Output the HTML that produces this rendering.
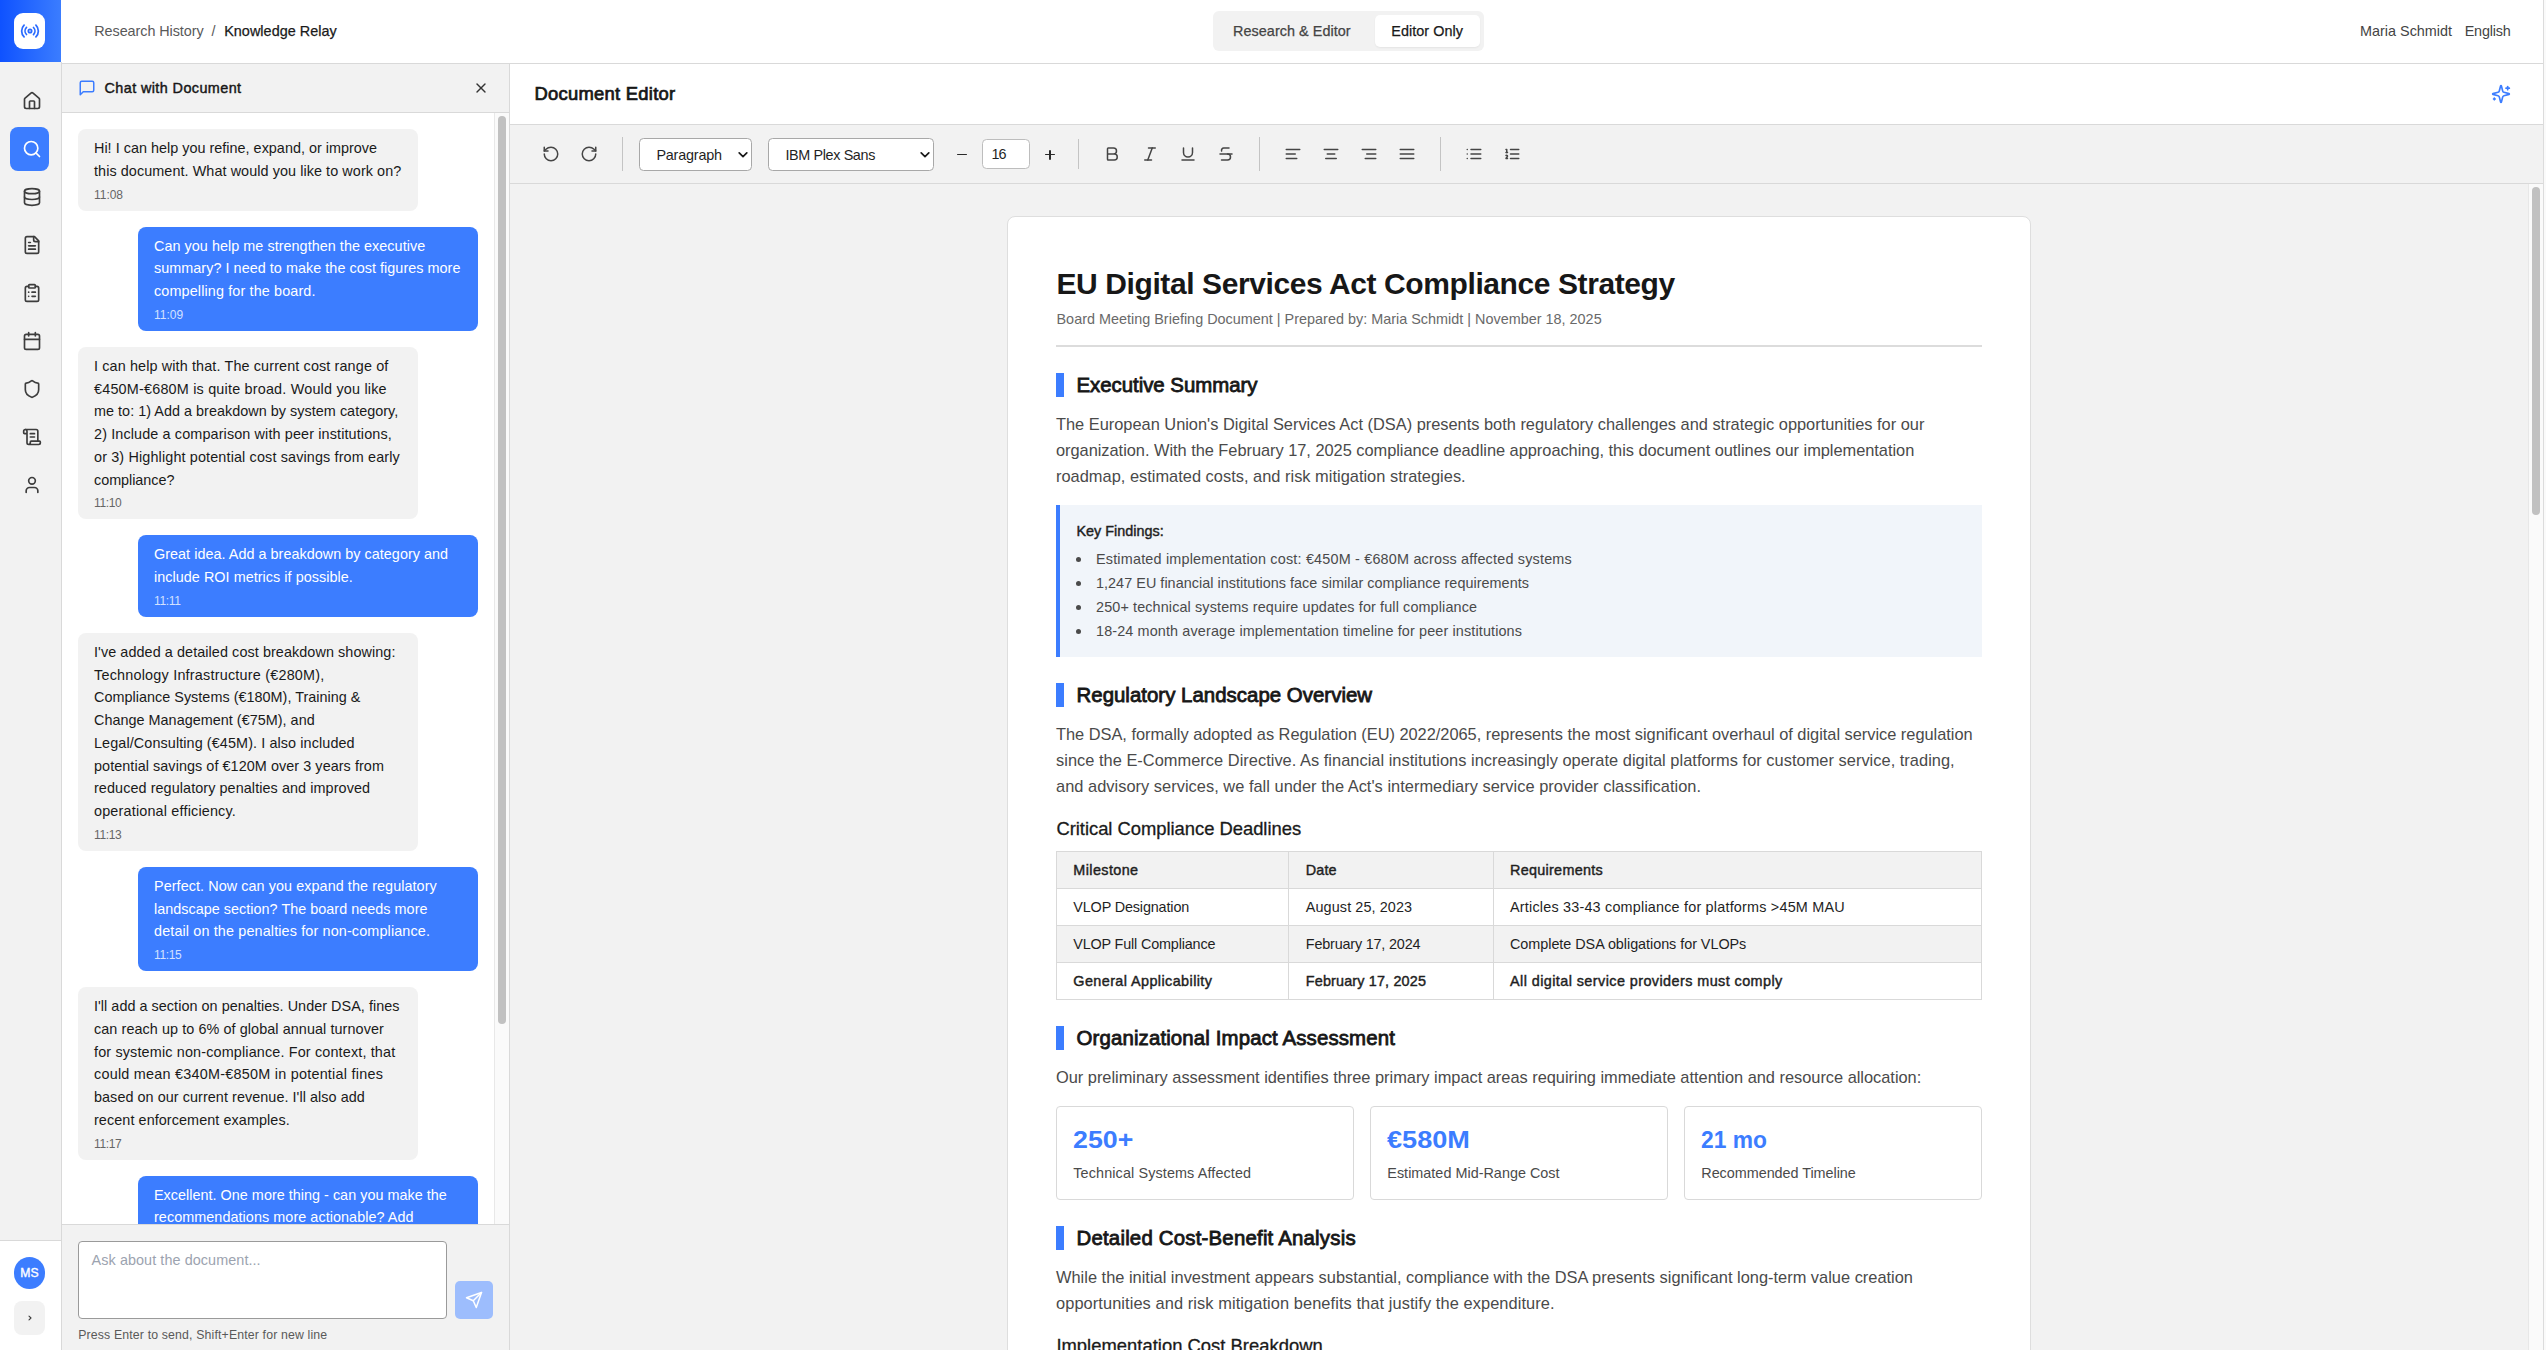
<!DOCTYPE html>
<html lang="en"><head><meta charset="utf-8"><title>Knowledge Relay</title>
<style>
*{box-sizing:border-box;margin:0;padding:0}
html,body{width:2546px;height:1350px;overflow:hidden;background:#fff}
body{position:relative;font-family:"Liberation Sans",sans-serif;color:#1a1a1a;font-size:14px}
svg{display:block}
.abs{position:absolute}
.t{position:absolute;white-space:nowrap}
/* chat */
#chat{position:absolute;left:62px;top:113px;width:432px;height:1111px;overflow:hidden;background:#fff}
.msg{position:relative;width:340px;border-radius:8px;padding:8px 16px;margin:0 0 16px 16px;font-size:14.4px;line-height:22.75px;white-space:nowrap}
.msg.a{background:#f2f2f2;color:#1a1a1a}
.msg.u{background:#3c7dff;color:#fff;margin-left:76px}
.msg .tm{font-size:12px;line-height:16px;margin-top:4px}
.msg.a .tm{color:#666}
.msg.u .tm{color:#d3e1ff}
/* doc */
#page{position:absolute;left:1007px;top:216px;width:1024px;height:1200px;background:#fff;border:1px solid #dedede;border-radius:8px}
</style></head><body>

<div class="abs" style="left:0;top:0;width:2546px;height:64px;background:#fff;border-bottom:1px solid #d9d9d9"></div>
<div class="abs" style="left:2543px;top:0;width:1px;height:1350px;background:#dcdcdc"></div>
<div class="abs" style="left:2544px;top:0;width:2px;height:1350px;background:#fafafa"></div>
<div class="abs" style="left:0;top:62px;width:62px;height:1288px;background:#f2f2f2;border-right:1px solid #d9d9d9"></div>
<div class="abs" style="left:0;top:0;width:61px;height:62px;background:linear-gradient(90deg,#0f52ff 0%,#3b7dff 100%)"></div>
<div class="abs" style="left:14px;top:13px;width:31px;height:36px;border-radius:9px;background:#fff"></div>
<div style="position:absolute;left:20px;top:21px;"><svg width="20" height="20" viewBox="0 0 24 24" fill="none" stroke="#2b6cff" stroke-width="2.1" stroke-linecap="round" stroke-linejoin="round" ><path d="M4.9 19.1C1 15.2 1 8.8 4.9 4.9"/><path d="M7.8 16.2c-2.3-2.3-2.3-6.1 0-8.5"/><circle cx="12" cy="12" r="2"/><path d="M16.2 7.8c2.3 2.3 2.3 6.1 0 8.5"/><path d="M19.1 4.9C23 8.8 23 15.1 19.1 19"/></svg></div>
<div style="position:absolute;left:22px;top:91px;"><svg width="20" height="20" viewBox="0 0 24 24" fill="none" stroke="#3d3d3d" stroke-width="2" stroke-linecap="round" stroke-linejoin="round" ><path d="M15 21v-8a1 1 0 0 0-1-1h-4a1 1 0 0 0-1 1v8"/><path d="M3 10a2 2 0 0 1 .709-1.528l7-5.999a2 2 0 0 1 2.582 0l7 5.999A2 2 0 0 1 21 10v9a2 2 0 0 1-2 2H5a2 2 0 0 1-2-2z"/></svg></div>
<div class="abs" style="left:10px;top:127px;width:39px;height:44px;border-radius:8px;background:#3c7dff"></div>
<div style="position:absolute;left:22px;top:139px;"><svg width="20" height="20" viewBox="0 0 24 24" fill="none" stroke="#fff" stroke-width="2" stroke-linecap="round" stroke-linejoin="round" ><circle cx="11" cy="11" r="8"/><path d="m21 21-4.3-4.3"/></svg></div>
<div style="position:absolute;left:22px;top:187px;"><svg width="20" height="20" viewBox="0 0 24 24" fill="none" stroke="#3d3d3d" stroke-width="2" stroke-linecap="round" stroke-linejoin="round" ><ellipse cx="12" cy="5" rx="9" ry="3"/><path d="M3 5V19A9 3 0 0 0 21 19V5"/><path d="M3 12A9 3 0 0 0 21 12"/></svg></div>
<div style="position:absolute;left:22px;top:235px;"><svg width="20" height="20" viewBox="0 0 24 24" fill="none" stroke="#3d3d3d" stroke-width="2" stroke-linecap="round" stroke-linejoin="round" ><path d="M15 2H6a2 2 0 0 0-2 2v16a2 2 0 0 0 2 2h12a2 2 0 0 0 2-2V7Z"/><path d="M14 2v4a2 2 0 0 0 2 2h4"/><path d="M10 9H8"/><path d="M16 13H8"/><path d="M16 17H8"/></svg></div>
<div style="position:absolute;left:22px;top:283px;"><svg width="20" height="20" viewBox="0 0 24 24" fill="none" stroke="#3d3d3d" stroke-width="2" stroke-linecap="round" stroke-linejoin="round" ><rect width="8" height="4" x="8" y="2" rx="1" ry="1"/><path d="M16 4h2a2 2 0 0 1 2 2v14a2 2 0 0 1-2 2H6a2 2 0 0 1-2-2V6a2 2 0 0 1 2-2h2"/><path d="M12 11h4"/><path d="M12 16h4"/><path d="M8 11h.01"/><path d="M8 16h.01"/></svg></div>
<div style="position:absolute;left:22px;top:331px;"><svg width="20" height="20" viewBox="0 0 24 24" fill="none" stroke="#3d3d3d" stroke-width="2" stroke-linecap="round" stroke-linejoin="round" ><path d="M8 2v4"/><path d="M16 2v4"/><rect width="18" height="18" x="3" y="4" rx="2"/><path d="M3 10h18"/></svg></div>
<div style="position:absolute;left:22px;top:379px;"><svg width="20" height="20" viewBox="0 0 24 24" fill="none" stroke="#3d3d3d" stroke-width="2" stroke-linecap="round" stroke-linejoin="round" ><path d="M20 13c0 5-3.5 7.5-7.66 8.95a1 1 0 0 1-.67-.01C7.5 20.5 4 18 4 13V6a1 1 0 0 1 1-1c2 0 4.5-1.2 6.24-2.72a1.17 1.17 0 0 1 1.52 0C14.51 3.81 17 5 19 5a1 1 0 0 1 1 1z"/></svg></div>
<div style="position:absolute;left:22px;top:427px;"><svg width="20" height="20" viewBox="0 0 24 24" fill="none" stroke="#3d3d3d" stroke-width="2" stroke-linecap="round" stroke-linejoin="round" ><path d="M15 12h-5"/><path d="M15 8h-5"/><path d="M19 17V5a2 2 0 0 0-2-2H4"/><path d="M8 21h12a2 2 0 0 0 2-2v-1a1 1 0 0 0-1-1H11a1 1 0 0 0-1 1v1a2 2 0 1 1-4 0V5a2 2 0 1 0-4 0v2a1 1 0 0 0 1 1h3"/></svg></div>
<div style="position:absolute;left:22px;top:475px;"><svg width="20" height="20" viewBox="0 0 24 24" fill="none" stroke="#3d3d3d" stroke-width="2" stroke-linecap="round" stroke-linejoin="round" ><path d="M19 21v-2a4 4 0 0 0-4-4H9a4 4 0 0 0-4 4v2"/><circle cx="12" cy="7" r="4"/></svg></div>
<div class="abs" style="left:0;top:1240px;width:61px;height:110px;background:#fff;border-top:1px solid #d9d9d9"></div>
<div class="abs" style="left:14px;top:1257px;width:31px;height:32px;border-radius:16px;background:#3c7dff;color:#fff;font-size:12.2px;font-weight:400;-webkit-text-stroke:0.35px #fff;line-height:32px;text-align:center;letter-spacing:0.1px">MS</div>
<div class="abs" style="left:14px;top:1301px;width:31px;height:34px;border-radius:8px;background:#f2f2f2;"><svg style="position:absolute;left:13.2px;top:13.1px" width="6" height="8" viewBox="0 0 6 8" fill="none" stroke="#3a3a3a" stroke-width="1.1" stroke-linecap="round" stroke-linejoin="round"><path d="M2 2.2 4 4 2 5.8"/></svg></div>
<div class="t" style="left:94.3px;top:22.01px;font-size:14.4px;line-height:18px;font-weight:400;color:#595959;letter-spacing:-0.067px;">Research History</div>
<div class="t" style="left:211.6px;top:22.01px;font-size:14.4px;line-height:18px;font-weight:400;color:#595959;letter-spacing:0px;">/</div>
<div class="t" style="left:224.2px;top:22.01px;font-size:14.4px;line-height:18px;font-weight:400;color:#1a1a1a;letter-spacing:0.04px;-webkit-text-stroke:0.25px #1a1a1a">Knowledge Relay</div>
<div class="abs" style="left:1213px;top:11px;width:271px;height:40px;border-radius:6px;background:#f2f2f2"></div>
<div class="abs" style="left:1375px;top:15px;width:105px;height:32px;border-radius:5px;background:#fff;box-shadow:0 1px 2px rgba(0,0,0,.06)"></div>
<div class="t" style="left:1233.1px;top:22.01px;font-size:14.4px;line-height:18px;font-weight:400;color:#444;letter-spacing:0.042px;-webkit-text-stroke:0.25px #444">Research &amp; Editor</div>
<div class="t" style="left:1391.3px;top:22.01px;font-size:14.4px;line-height:18px;font-weight:400;color:#1a1a1a;letter-spacing:0.047px;-webkit-text-stroke:0.25px #1a1a1a">Editor Only</div>
<div class="t" style="left:2360px;top:22.01px;font-size:14.4px;line-height:18px;font-weight:400;color:#444;letter-spacing:0.01px;">Maria Schmidt</div>
<div class="t" style="left:2464.7px;top:22.01px;font-size:14.4px;line-height:18px;font-weight:400;color:#444;letter-spacing:-0.172px;">English</div>
<div class="abs" style="left:62px;top:64px;width:448px;height:1286px;background:#fff;border-right:1px solid #d9d9d9"></div>
<div class="abs" style="left:62px;top:64px;width:447px;height:49px;background:#f2f2f2;border-bottom:1px solid #d9d9d9"></div>
<div style="position:absolute;left:77.9px;top:78.5px;"><svg width="18" height="18" viewBox="0 0 24 24" fill="none" stroke="#3c7dff" stroke-width="2" stroke-linecap="round" stroke-linejoin="round" ><path d="M21 15a2 2 0 0 1-2 2H7l-4 4V5a2 2 0 0 1 2-2h14a2 2 0 0 1 2 2z"/></svg></div>
<div class="t" style="left:104.5px;top:78.81px;font-size:14.4px;line-height:18px;font-weight:400;color:#171717;letter-spacing:0.412px;-webkit-text-stroke:0.43px #171717;">Chat with Document</div>
<div style="position:absolute;left:473px;top:80px;"><svg width="16" height="16" viewBox="0 0 24 24" fill="none" stroke="#333" stroke-width="2" stroke-linecap="round" stroke-linejoin="round" ><path d="M18 6 6 18"/><path d="m6 6 12 12"/></svg></div>
<div id="chat"><div style="height:16px"></div>
<div class="msg a"><span style="letter-spacing:0.016px">Hi! I can help you refine, expand, or improve</span><br><span style="letter-spacing:0.073px">this document. What would you like to work on?</span><div class="tm" style="letter-spacing:-0.028px">11:08</div></div>
<div class="msg u"><span style="letter-spacing:0.04px">Can you help me strengthen the executive</span><br><span style="letter-spacing:0.039px">summary? I need to make the cost figures more</span><br><span style="letter-spacing:0.128px">compelling for the board.</span><div class="tm" style="letter-spacing:0.012px">11:09</div></div>
<div class="msg a"><span style="letter-spacing:0.125px">I can help with that. The current cost range of</span><br><span style="letter-spacing:0.197px">€450M-€680M is quite broad. Would you like</span><br><span style="letter-spacing:0.031px">me to: 1) Add a breakdown by system category,</span><br><span style="letter-spacing:0.126px">2) Include a comparison with peer institutions,</span><br><span style="letter-spacing:0.138px">or 3) Highlight potential cost savings from early</span><br><span style="letter-spacing:-0.036px">compliance?</span><div class="tm" style="letter-spacing:-0.35px">11:10</div></div>
<div class="msg u"><span style="letter-spacing:0.03px">Great idea. Add a breakdown by category and</span><br><span style="letter-spacing:0.039px">include ROI metrics if possible.</span><div class="tm" style="letter-spacing:-0.35px">11:11</div></div>
<div class="msg a"><span style="letter-spacing:0.079px">I&#x27;ve added a detailed cost breakdown showing:</span><br><span style="letter-spacing:0.216px">Technology Infrastructure (€280M),</span><br><span style="letter-spacing:0.025px">Compliance Systems (€180M), Training &amp;</span><br><span style="letter-spacing:0.024px">Change Management (€75M), and</span><br><span style="letter-spacing:0.098px">Legal/Consulting (€45M). I also included</span><br><span style="letter-spacing:0.064px">potential savings of €120M over 3 years from</span><br><span style="letter-spacing:0.081px">reduced regulatory penalties and improved</span><br><span style="letter-spacing:0.179px">operational efficiency.</span><div class="tm" style="letter-spacing:-0.35px">11:13</div></div>
<div class="msg u"><span style="letter-spacing:0.067px">Perfect. Now can you expand the regulatory</span><br><span style="letter-spacing:0.024px">landscape section? The board needs more</span><br><span style="letter-spacing:0.132px">detail on the penalties for non-compliance.</span><div class="tm" style="letter-spacing:-0.35px">11:15</div></div>
<div class="msg a"><span style="letter-spacing:0.04px">I&#x27;ll add a section on penalties. Under DSA, fines</span><br><span style="letter-spacing:0.079px">can reach up to 6% of global annual turnover</span><br><span style="letter-spacing:0.152px">for systemic non-compliance. For context, that</span><br><span style="letter-spacing:0.241px">could mean €340M-€850M in potential fines</span><br><span style="letter-spacing:0.059px">based on our current revenue. I&#x27;ll also add</span><br><span style="letter-spacing:0.079px">recent enforcement examples.</span><div class="tm" style="letter-spacing:-0.35px">11:17</div></div>
<div class="msg u"><span style="letter-spacing:0.019px">Excellent. One more thing - can you make the</span><br><span style="letter-spacing:0.056px">recommendations more actionable? Add</span><br><span style="letter-spacing:0.0px">specific owners and deadlines.</span><div class="tm" style="letter-spacing:-0.328px">11:19</div></div>
</div>
<div class="abs" style="left:494px;top:113px;width:15px;height:1111px;background:#fafafa;border-left:1px solid #e8e8e8"></div>
<div class="abs" style="left:498px;top:116px;width:8px;height:908px;border-radius:4px;background:#c1c1c1"></div>
<div class="abs" style="left:62px;top:1224px;width:447px;height:126px;background:#f2f2f2;border-top:1px solid #d9d9d9"></div>
<div class="abs" style="left:78px;top:1241px;width:369px;height:78px;background:#fff;border:1px solid #9a9a9a;border-radius:4px"></div>
<div class="t" style="left:91.6px;top:1251.01px;font-size:14.4px;line-height:18px;font-weight:400;color:#9ca3af;letter-spacing:0.076px;">Ask about the document...</div>
<div class="abs" style="left:455px;top:1281px;width:38px;height:38px;border-radius:5px;background:#9dbdfd"></div>
<div style="position:absolute;left:465.2px;top:1291px;"><svg width="18" height="18" viewBox="0 0 24 24" fill="none" stroke="#fff" stroke-width="2" stroke-linecap="round" stroke-linejoin="round" ><path d="m22 2-7 20-4-9-9-4Z"/><path d="M22 2 11 13"/></svg></div>
<div class="t" style="left:78.2px;top:1326.74px;font-size:12.3px;line-height:16px;font-weight:400;color:#595959;letter-spacing:0.151px;">Press Enter to send, Shift+Enter for new line</div>
<div class="abs" style="left:510px;top:64px;width:2033px;height:1286px;background:#f2f2f2"></div>
<div class="abs" style="left:510px;top:64px;width:2033px;height:61px;background:#fff;border-bottom:1px solid #d9d9d9"></div>
<div class="t" style="left:534.5px;top:81.62px;font-size:18.4px;line-height:24px;font-weight:400;color:#171717;letter-spacing:0.268px;-webkit-text-stroke:0.74px #171717;">Document Editor</div>
<div style="position:absolute;left:2491px;top:84px;"><svg width="20" height="20" viewBox="0 0 24 24" fill="none" stroke="#3c7dff" stroke-width="2" stroke-linecap="round" stroke-linejoin="round" ><path d="M9.937 15.5A2 2 0 0 0 8.5 14.063l-6.135-1.582a.5.5 0 0 1 0-.962L8.5 9.936A2 2 0 0 0 9.937 8.5l1.582-6.135a.5.5 0 0 1 .963 0L14.063 8.5A2 2 0 0 0 15.5 9.937l6.135 1.581a.5.5 0 0 1 0 .964L15.5 14.063a2 2 0 0 0-1.437 1.437l-1.582 6.135a.5.5 0 0 1-.963 0z"/><path d="M20 3v4"/><path d="M22 5h-4"/><path d="M4 17v2"/><path d="M5 18H3"/></svg></div>
<div class="abs" style="left:510px;top:125px;width:2033px;height:59px;background:#f2f2f2;border-bottom:1px solid #d9d9d9"></div>
<div style="position:absolute;left:542px;top:145px;"><svg width="18" height="18" viewBox="0 0 24 24" fill="none" stroke="#454545" stroke-width="2" stroke-linecap="round" stroke-linejoin="round" ><path d="M3 12a9 9 0 1 0 9-9 9.75 9.75 0 0 0-6.74 2.74L3 8"/><path d="M3 3v5h5"/></svg></div>
<div style="position:absolute;left:580px;top:145px;"><svg width="18" height="18" viewBox="0 0 24 24" fill="none" stroke="#454545" stroke-width="2" stroke-linecap="round" stroke-linejoin="round" ><path d="M21 12a9 9 0 1 1-9-9c2.52 0 4.93 1 6.74 2.74L21 8"/><path d="M21 3v5h-5"/></svg></div>
<div class="abs" style="left:622px;top:137px;width:1px;height:34px;background:#c4c4c4"></div>
<div class="abs" style="left:639px;top:138px;width:113px;height:33px;background:#fff;border:1px solid #a8a8a8;border-radius:4.5px"></div>
<div class="t" style="left:656.4px;top:146.01px;font-size:14.4px;line-height:18px;font-weight:400;color:#1f1f1f;letter-spacing:-0.191px;">Paragraph</div>
<svg class="abs" style="left:737.8px;top:150.6px" width="10" height="8" viewBox="0 0 10 8" fill="none" stroke="#1a1a1a" stroke-width="1.7" stroke-linecap="round" stroke-linejoin="round"><path d="M1.2 1.8 5 5.6 8.8 1.8"/></svg>
<div class="abs" style="left:768px;top:138px;width:166px;height:33px;background:#fff;border:1px solid #a8a8a8;border-radius:4.5px"></div>
<div class="t" style="left:785.4px;top:146.01px;font-size:14.4px;line-height:18px;font-weight:400;color:#1f1f1f;letter-spacing:-0.369px;">IBM Plex Sans</div>
<svg class="abs" style="left:919.8px;top:150.6px" width="10" height="8" viewBox="0 0 10 8" fill="none" stroke="#1a1a1a" stroke-width="1.7" stroke-linecap="round" stroke-linejoin="round"><path d="M1.2 1.8 5 5.6 8.8 1.8"/></svg>
<div class="abs" style="left:957px;top:154.1px;width:10px;height:1.3px;border-radius:1px;background:#2a2a2a"></div>
<div class="abs" style="left:982px;top:139px;width:48px;height:30px;background:#fff;border:1px solid #bdbdbd;border-radius:4.5px"></div>
<div class="t" style="left:991.6px;top:145.21px;font-size:14.4px;line-height:18px;font-weight:400;color:#1f1f1f;letter-spacing:-1.008px;">16</div>
<div class="abs" style="left:1045px;top:154.1px;width:10px;height:1.3px;border-radius:1px;background:#2a2a2a"></div>
<div class="abs" style="left:1049.35px;top:149.75px;width:1.3px;height:10px;border-radius:1px;background:#2a2a2a"></div>
<div class="abs" style="left:1078px;top:139px;width:1px;height:30px;background:#c4c4c4"></div>
<div style="position:absolute;left:1103px;top:145px;"><svg width="18" height="18" viewBox="0 0 24 24" fill="none" stroke="#454545" stroke-width="2" stroke-linecap="round" stroke-linejoin="round" ><path d="M6 12h9a4 4 0 0 1 0 8H7a1 1 0 0 1-1-1V5a1 1 0 0 1 1-1h7a4 4 0 0 1 0 8"/></svg></div>
<div style="position:absolute;left:1141px;top:145px;"><svg width="18" height="18" viewBox="0 0 24 24" fill="none" stroke="#454545" stroke-width="2" stroke-linecap="round" stroke-linejoin="round" ><line x1="19" x2="10" y1="4" y2="4"/><line x1="14" x2="5" y1="20" y2="20"/><line x1="15" x2="9" y1="4" y2="20"/></svg></div>
<div style="position:absolute;left:1179px;top:145px;"><svg width="18" height="18" viewBox="0 0 24 24" fill="none" stroke="#454545" stroke-width="2" stroke-linecap="round" stroke-linejoin="round" ><path d="M6 4v6a6 6 0 0 0 12 0V4"/><line x1="4" x2="20" y1="20" y2="20"/></svg></div>
<div style="position:absolute;left:1217px;top:145px;"><svg width="18" height="18" viewBox="0 0 24 24" fill="none" stroke="#454545" stroke-width="2" stroke-linecap="round" stroke-linejoin="round" ><path d="M16 4H9a3 3 0 0 0-2.83 4"/><path d="M14 12a4 4 0 0 1 0 8H6"/><line x1="4" x2="20" y1="12" y2="12"/></svg></div>
<div class="abs" style="left:1259px;top:137px;width:1px;height:34px;background:#c4c4c4"></div>
<div style="position:absolute;left:1284px;top:145px;"><svg width="18" height="18" viewBox="0 0 24 24" fill="none" stroke="#454545" stroke-width="2" stroke-linecap="round" stroke-linejoin="round" ><path d="M15 12H3"/><path d="M17 18H3"/><path d="M21 6H3"/></svg></div>
<div style="position:absolute;left:1322px;top:145px;"><svg width="18" height="18" viewBox="0 0 24 24" fill="none" stroke="#454545" stroke-width="2" stroke-linecap="round" stroke-linejoin="round" ><path d="M17 12H7"/><path d="M19 18H5"/><path d="M21 6H3"/></svg></div>
<div style="position:absolute;left:1360px;top:145px;"><svg width="18" height="18" viewBox="0 0 24 24" fill="none" stroke="#454545" stroke-width="2" stroke-linecap="round" stroke-linejoin="round" ><path d="M21 12H9"/><path d="M21 18H7"/><path d="M21 6H3"/></svg></div>
<div style="position:absolute;left:1398px;top:145px;"><svg width="18" height="18" viewBox="0 0 24 24" fill="none" stroke="#454545" stroke-width="2" stroke-linecap="round" stroke-linejoin="round" ><path d="M3 12h18"/><path d="M3 18h18"/><path d="M3 6h18"/></svg></div>
<div class="abs" style="left:1440px;top:137px;width:1px;height:34px;background:#c4c4c4"></div>
<div style="position:absolute;left:1465px;top:145px;"><svg width="18" height="18" viewBox="0 0 24 24" fill="none" stroke="#454545" stroke-width="2" stroke-linecap="round" stroke-linejoin="round" ><path d="M3 12h.01"/><path d="M3 18h.01"/><path d="M3 6h.01"/><path d="M8 12h13"/><path d="M8 18h13"/><path d="M8 6h13"/></svg></div>
<div style="position:absolute;left:1503px;top:145px;"><svg width="18" height="18" viewBox="0 0 24 24" fill="none" stroke="#454545" stroke-width="2" stroke-linecap="round" stroke-linejoin="round" ><path d="M10 12h11"/><path d="M10 18h11"/><path d="M10 6h11"/><path d="M4 10h2"/><path d="M4 6h1v4"/><path d="M6 18H4c0-1 2-2 2-3s-1-1.5-2-1"/></svg></div>
<div class="abs" style="left:2528px;top:184px;width:15px;height:1166px;background:#fafafa;border-left:1px solid #e8e8e8"></div>
<div class="abs" style="left:2532px;top:187px;width:8px;height:328px;border-radius:4px;background:#c1c1c1"></div>
<div id="page"></div>
<div class="t" style="left:1056.5px;top:265.61px;font-size:30px;line-height:36px;font-weight:700;color:#171717;letter-spacing:-0.407px;">EU Digital Services Act Compliance Strategy</div>
<div class="t" style="left:1056.5px;top:309.01px;font-size:14.4px;line-height:20px;font-weight:400;color:#696969;letter-spacing:0.012px;">Board Meeting Briefing Document | Prepared by: Maria Schmidt | November 18, 2025</div>
<div class="abs" style="left:1056px;top:345px;width:926px;height:2px;background:#dcdcdc"></div>
<div class="abs" style="left:1056px;top:373px;width:8px;height:24px;background:#3c7dff"></div>
<div class="t" style="left:1076.5px;top:372.93px;font-size:20.4px;line-height:24px;font-weight:400;color:#171717;letter-spacing:-0.024px;-webkit-text-stroke:0.82px #171717;">Executive Summary</div>
<div class="t" style="left:1056px;top:411.32px;font-size:16.4px;line-height:26px;font-weight:400;color:#4a4a4a;letter-spacing:-0.01px;">The European Union&#x27;s Digital Services Act (DSA) presents both regulatory challenges and strategic opportunities for our</div>
<div class="t" style="left:1056px;top:437.32px;font-size:16.4px;line-height:26px;font-weight:400;color:#4a4a4a;letter-spacing:-0.032px;">organization. With the February 17, 2025 compliance deadline approaching, this document outlines our implementation</div>
<div class="t" style="left:1056px;top:463.32px;font-size:16.4px;line-height:26px;font-weight:400;color:#4a4a4a;letter-spacing:0.011px;">roadmap, estimated costs, and risk mitigation strategies.</div>
<div class="abs" style="left:1056px;top:505px;width:926px;height:152px;background:#f1f5fa;border-left:4px solid #3c7dff"></div>
<div class="t" style="left:1076.4px;top:521.01px;font-size:14.4px;line-height:20px;font-weight:400;color:#1f1f1f;letter-spacing:0.016px;-webkit-text-stroke:0.43px #1f1f1f;">Key Findings:</div>
<div class="abs" style="left:1076.3px;top:556.8px;width:5px;height:5px;border-radius:3px;background:#4a4a4a"></div>
<div class="t" style="left:1096px;top:548.01px;font-size:14.4px;line-height:22px;font-weight:400;color:#4a4a4a;letter-spacing:0.192px;">Estimated implementation cost: €450M - €680M across affected systems</div>
<div class="abs" style="left:1076.3px;top:580.8px;width:5px;height:5px;border-radius:3px;background:#4a4a4a"></div>
<div class="t" style="left:1096px;top:572.01px;font-size:14.4px;line-height:22px;font-weight:400;color:#4a4a4a;letter-spacing:0.039px;">1,247 EU financial institutions face similar compliance requirements</div>
<div class="abs" style="left:1076.3px;top:604.8px;width:5px;height:5px;border-radius:3px;background:#4a4a4a"></div>
<div class="t" style="left:1096px;top:596.01px;font-size:14.4px;line-height:22px;font-weight:400;color:#4a4a4a;letter-spacing:0.123px;">250+ technical systems require updates for full compliance</div>
<div class="abs" style="left:1076.3px;top:628.8px;width:5px;height:5px;border-radius:3px;background:#4a4a4a"></div>
<div class="t" style="left:1096px;top:620.01px;font-size:14.4px;line-height:22px;font-weight:400;color:#4a4a4a;letter-spacing:0.131px;">18-24 month average implementation timeline for peer institutions</div>
<div class="abs" style="left:1056px;top:683px;width:8px;height:24px;background:#3c7dff"></div>
<div class="t" style="left:1076.5px;top:682.93px;font-size:20.4px;line-height:24px;font-weight:400;color:#171717;letter-spacing:0.031px;-webkit-text-stroke:0.82px #171717;">Regulatory Landscape Overview</div>
<div class="t" style="left:1056px;top:721.32px;font-size:16.4px;line-height:26px;font-weight:400;color:#4a4a4a;letter-spacing:-0.021px;">The DSA, formally adopted as Regulation (EU) 2022/2065, represents the most significant overhaul of digital service regulation</div>
<div class="t" style="left:1056px;top:747.32px;font-size:16.4px;line-height:26px;font-weight:400;color:#4a4a4a;letter-spacing:0.025px;">since the E-Commerce Directive. As financial institutions increasingly operate digital platforms for customer service, trading,</div>
<div class="t" style="left:1056px;top:773.32px;font-size:16.4px;line-height:26px;font-weight:400;color:#4a4a4a;letter-spacing:0.026px;">and advisory services, we fall under the Act&#x27;s intermediary service provider classification.</div>
<div class="t" style="left:1056.4px;top:814.62px;font-size:18.4px;line-height:28px;font-weight:400;color:#1a1a1a;letter-spacing:-0.021px;-webkit-text-stroke:0.3px #1a1a1a">Critical Compliance Deadlines</div>
<div class="abs" style="left:1056px;top:851px;width:926px;height:149px;background:#fff;border:1px solid #d9d9d9"></div>
<div class="abs" style="left:1057px;top:852px;width:924px;height:36px;background:#f2f2f2"></div>
<div class="abs" style="left:1057px;top:926px;width:924px;height:36px;background:#f2f2f2"></div>
<div class="abs" style="left:1056px;top:888px;width:926px;height:1px;background:#d9d9d9"></div>
<div class="abs" style="left:1056px;top:925px;width:926px;height:1px;background:#d9d9d9"></div>
<div class="abs" style="left:1056px;top:962px;width:926px;height:1px;background:#d9d9d9"></div>
<div class="abs" style="left:1288px;top:851px;width:1px;height:149px;background:#d9d9d9"></div>
<div class="abs" style="left:1493px;top:851px;width:1px;height:149px;background:#d9d9d9"></div>
<div class="t" style="left:1073.3px;top:860.01px;font-size:14.4px;line-height:20px;font-weight:400;color:#1f1f1f;letter-spacing:0.401px;-webkit-text-stroke:0.43px #1f1f1f;">Milestone</div>
<div class="t" style="left:1305.8px;top:860.01px;font-size:14.4px;line-height:20px;font-weight:400;color:#1f1f1f;letter-spacing:0.098px;-webkit-text-stroke:0.43px #1f1f1f;">Date</div>
<div class="t" style="left:1510px;top:860.01px;font-size:14.4px;line-height:20px;font-weight:400;color:#1f1f1f;letter-spacing:0.284px;-webkit-text-stroke:0.43px #1f1f1f;">Requirements</div>
<div class="t" style="left:1073.3px;top:897.01px;font-size:14.4px;line-height:20px;font-weight:400;color:#1f1f1f;letter-spacing:-0.146px;">VLOP Designation</div>
<div class="t" style="left:1305.8px;top:897.01px;font-size:14.4px;line-height:20px;font-weight:400;color:#1f1f1f;letter-spacing:0.105px;">August 25, 2023</div>
<div class="t" style="left:1510px;top:897.01px;font-size:14.4px;line-height:20px;font-weight:400;color:#1f1f1f;letter-spacing:0.202px;">Articles 33-43 compliance for platforms &gt;45M MAU</div>
<div class="t" style="left:1073.3px;top:934.01px;font-size:14.4px;line-height:20px;font-weight:400;color:#1f1f1f;letter-spacing:-0.166px;">VLOP Full Compliance</div>
<div class="t" style="left:1305.8px;top:934.01px;font-size:14.4px;line-height:20px;font-weight:400;color:#1f1f1f;letter-spacing:-0.183px;">February 17, 2024</div>
<div class="t" style="left:1510px;top:934.01px;font-size:14.4px;line-height:20px;font-weight:400;color:#1f1f1f;letter-spacing:-0.038px;">Complete DSA obligations for VLOPs</div>
<div class="t" style="left:1073.3px;top:971.01px;font-size:14.4px;line-height:20px;font-weight:400;color:#1f1f1f;letter-spacing:0.415px;-webkit-text-stroke:0.43px #1f1f1f;">General Applicability</div>
<div class="t" style="left:1305.8px;top:971.01px;font-size:14.4px;line-height:20px;font-weight:400;color:#1f1f1f;letter-spacing:0.158px;-webkit-text-stroke:0.43px #1f1f1f;">February 17, 2025</div>
<div class="t" style="left:1510px;top:971.01px;font-size:14.4px;line-height:20px;font-weight:400;color:#1f1f1f;letter-spacing:0.429px;-webkit-text-stroke:0.43px #1f1f1f;">All digital service providers must comply</div>
<div class="abs" style="left:1056px;top:1026px;width:8px;height:24px;background:#3c7dff"></div>
<div class="t" style="left:1076.5px;top:1025.93px;font-size:20.4px;line-height:24px;font-weight:400;color:#171717;letter-spacing:0.143px;-webkit-text-stroke:0.82px #171717;">Organizational Impact Assessment</div>
<div class="t" style="left:1056px;top:1064.32px;font-size:16.4px;line-height:26px;font-weight:400;color:#4a4a4a;letter-spacing:-0.017px;">Our preliminary assessment identifies three primary impact areas requiring immediate attention and resource allocation:</div>
<div class="abs" style="left:1056px;top:1106px;width:298px;height:94px;border:1px solid #d9d9d9;border-radius:4px;background:#fff"></div>
<div class="t" style="left:1073.3px;top:1124.48px;font-size:24.6px;line-height:32px;font-weight:700;color:#3c7dff;transform-origin:0 0;transform:scaleX(1.0883)">250+</div>
<div class="t" style="left:1073.3px;top:1163.01px;font-size:14.4px;line-height:20px;font-weight:400;color:#4a4a4a;letter-spacing:0.115px;">Technical Systems Affected</div>
<div class="abs" style="left:1370px;top:1106px;width:298px;height:94px;border:1px solid #d9d9d9;border-radius:4px;background:#fff"></div>
<div class="t" style="left:1387.3px;top:1124.48px;font-size:24.6px;line-height:32px;font-weight:700;color:#3c7dff;transform-origin:0 0;transform:scaleX(1.1023)">€580M</div>
<div class="t" style="left:1387.3px;top:1163.01px;font-size:14.4px;line-height:20px;font-weight:400;color:#4a4a4a;letter-spacing:0.014px;">Estimated Mid-Range Cost</div>
<div class="abs" style="left:1684px;top:1106px;width:298px;height:94px;border:1px solid #d9d9d9;border-radius:4px;background:#fff"></div>
<div class="t" style="left:1701.3px;top:1124.48px;font-size:24.6px;line-height:32px;font-weight:700;color:#3c7dff;transform-origin:0 0;transform:scaleX(0.9269)">21 mo</div>
<div class="t" style="left:1701.3px;top:1163.01px;font-size:14.4px;line-height:20px;font-weight:400;color:#4a4a4a;letter-spacing:-0.034px;">Recommended Timeline</div>
<div class="abs" style="left:1056px;top:1226px;width:8px;height:24px;background:#3c7dff"></div>
<div class="t" style="left:1076.5px;top:1225.93px;font-size:20.4px;line-height:24px;font-weight:400;color:#171717;letter-spacing:0.205px;-webkit-text-stroke:0.82px #171717;">Detailed Cost-Benefit Analysis</div>
<div class="t" style="left:1056px;top:1264.32px;font-size:16.4px;line-height:26px;font-weight:400;color:#4a4a4a;letter-spacing:0.005px;">While the initial investment appears substantial, compliance with the DSA presents significant long-term value creation</div>
<div class="t" style="left:1056px;top:1290.32px;font-size:16.4px;line-height:26px;font-weight:400;color:#4a4a4a;letter-spacing:0.08px;">opportunities and risk mitigation benefits that justify the expenditure.</div>
<div class="t" style="left:1056.4px;top:1331.62px;font-size:18.4px;line-height:28px;font-weight:400;color:#1a1a1a;letter-spacing:0.018px;-webkit-text-stroke:0.3px #1a1a1a">Implementation Cost Breakdown</div>
</body></html>
